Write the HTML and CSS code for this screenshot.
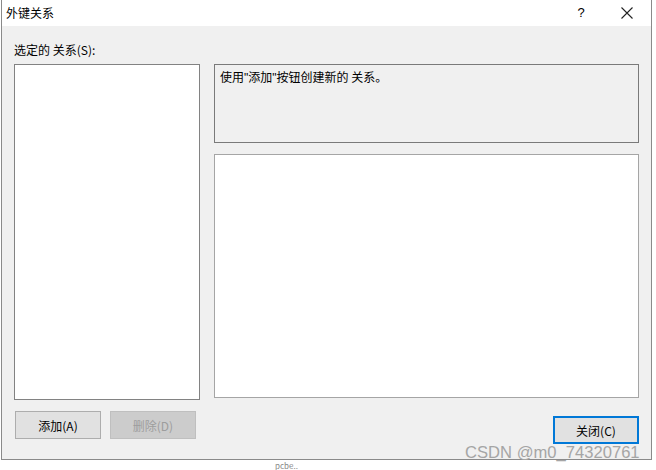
FILE: index.html
```html
<!DOCTYPE html>
<html>
<head>
  <meta charset="utf-8">
  <link rel="stylesheet" href="styles.css">
  <title>外键关系</title>
</head>
<body>
  <div class="dialog">
    <div class="titlebar">
      <span class="title">外键关系</span>
      <span class="tb-btn help">?</span>
      <span class="tb-btn close">
        <svg width="12" height="12" viewBox="0 0 12 12"><path d="M0.5 0.5L11.5 11.5M11.5 0.5L0.5 11.5" stroke="#222" stroke-width="1.1" fill="none"/></svg>
      </span>
    </div>
    <div class="content">
      <div class="label">选定的 关系(S):</div>
      <div class="main">
        <div class="left-col">
          <div class="list"></div>
          <div class="btn-row">
            <button class="button">添加(A)</button>
            <button class="button disabled">删除(D)</button>
          </div>
        </div>
        <div class="right-col">
          <div class="info">使用<span class="q">"</span>添加<span class="q">"</span>按钮创建新的 关系。</div>
          <div class="grid-box"></div>
          <div class="close-row">
            <button class="button default">关闭(C)</button>
          </div>
        </div>
      </div>
    </div>
  </div>
  <div class="watermark">CSDN @m0_74320761</div>
  <div class="below">pcbe..</div>
</body>
</html>
```

FILE: styles.css
```css
body {
  margin: 0;
  width: 656px;
  height: 470px;
  background: #ffffff;
  font-family: "Noto Sans CJK SC", "Liberation Sans", sans-serif;
  font-size: 12px;
  color: #000;
  position: relative;
  overflow: hidden;
}
.dialog {
  margin-left: 1px;
  width: 649px;
  height: 459px;
  border: 1px solid #8a8a8a;
  border-top: none;
  background: #f0f0f0;
  display: flex;
  flex-direction: column;
}
.titlebar {
  height: 26px;
  background: #ffffff;
  display: flex;
  align-items: center;
}
.title {
  padding-left: 4px;
  flex: 1;
  line-height: 26px;
}
.tb-btn {
  width: 46px;
  text-align: center;
  line-height: 26px;
}
.help {
  font-family: "Liberation Sans", sans-serif;
  font-size: 13px;
}
.close {
  display: flex;
  justify-content: center;
  align-items: center;
  height: 26px;
  margin-right: 1px;
}
.content {
  flex: 1;
  padding: 15px 12px 0 12px;
}
.label {
  height: 23px;
  line-height: 17px;
}
.main {
  display: flex;
  gap: 14px;
}
.left-col {
  width: 186px;
}
.list {
  height: 334px;
  background: #fff;
  border: 1px solid #828282;
}
.btn-row {
  display: flex;
  gap: 9px;
  margin-top: 11px;
  padding-left: 1px;
}
.button {
  width: 86px;
  height: 28px;
  background: #e1e1e1;
  border: 1px solid #adadad;
  font-family: "Noto Sans CJK SC", "Liberation Sans", sans-serif;
  font-size: 12px;
  color: #000;
  padding: 0;
}
.button.disabled {
  background: #cccccc;
  border-color: #bfbfbf;
  color: #9d9d9d;
}
.button.default {
  border: 2px solid #0078d7;
}
.right-col {
  width: 425px;
  display: flex;
  flex-direction: column;
}
.info {
  height: 67px;
  border: 1px solid #7a7a7a;
  padding: 5px 5px;
  line-height: 14px;
}
.q {
  font-family: "Liberation Sans", sans-serif;
}
.grid-box {
  margin-top: 11px;
  height: 242px;
  background: #fff;
  border: 1px solid #a5a5a5;
}
.close-row {
  display: flex;
  justify-content: flex-end;
  margin-top: 18px;
}
.watermark {
  position: absolute;
  left: 465px;
  top: 443px;
  font-family: "Liberation Sans", sans-serif;
  font-size: 16.6px;
  color: #a5a5a5;
}
.below {
  position: absolute;
  left: 275px;
  top: 461px;
  font-size: 8px;
  line-height: 9px;
  color: #888;
}
```
